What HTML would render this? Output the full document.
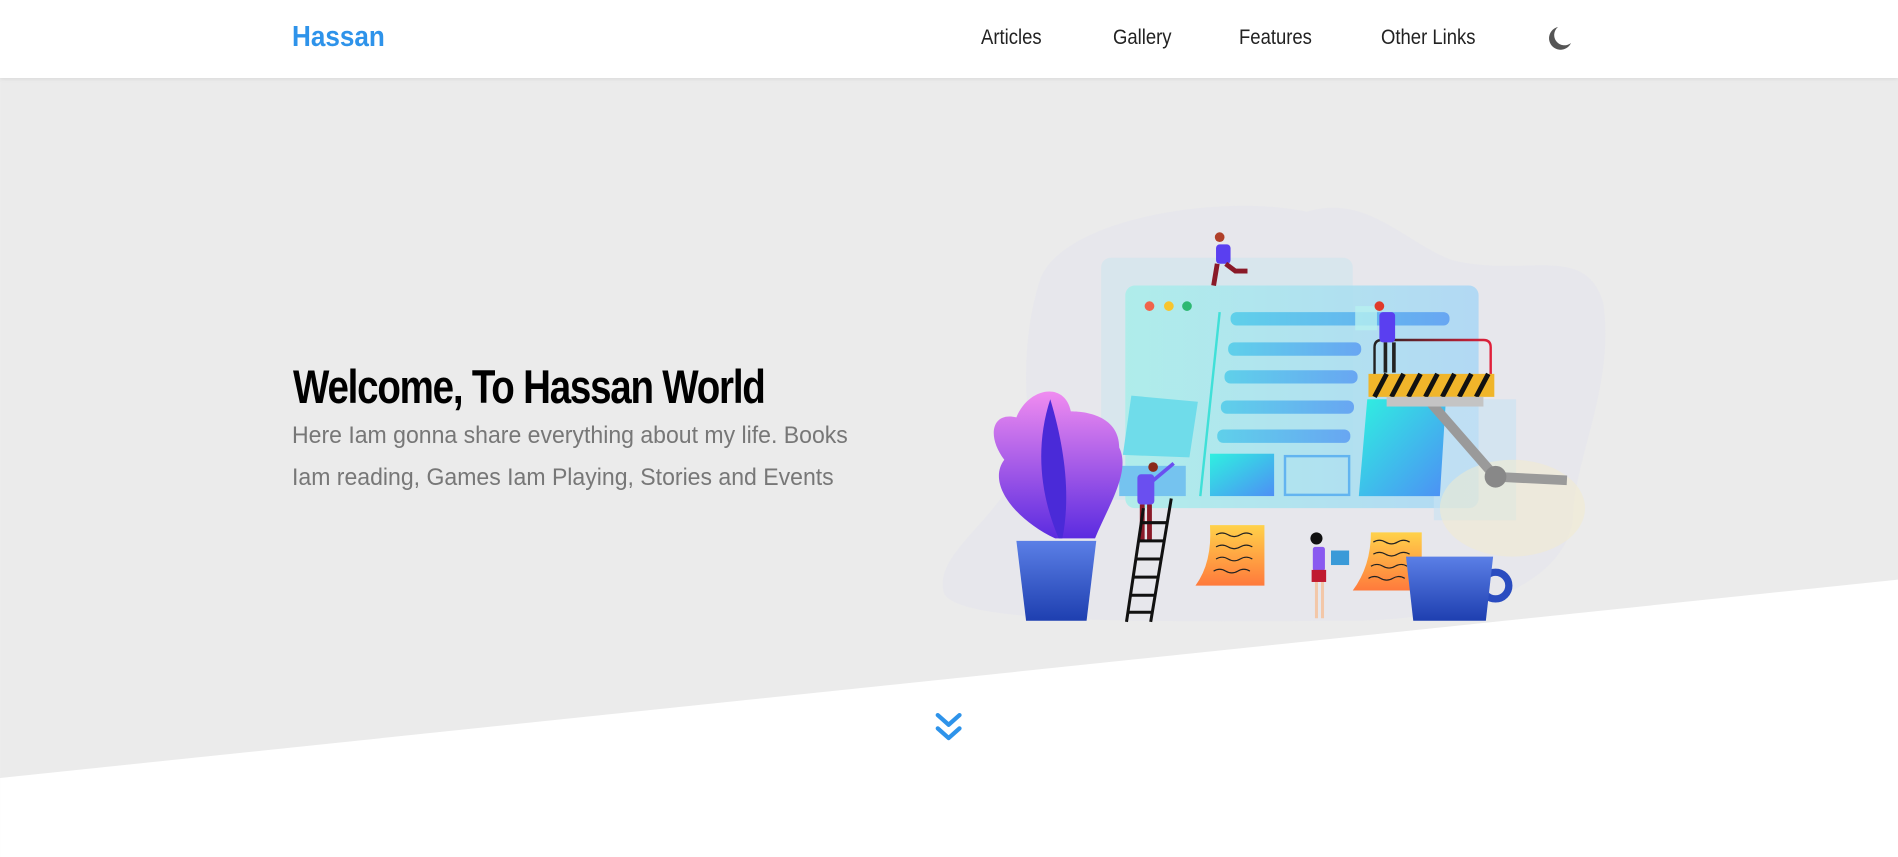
<!DOCTYPE html>
<html><head><meta charset="utf-8"><style>
*{margin:0;padding:0;box-sizing:border-box}
body{width:1898px;height:857px;overflow:hidden;background:#fff;font-family:"Liberation Sans",sans-serif;position:relative}
.bg{position:absolute;left:0;top:0}
header{position:absolute;left:0;top:0;width:1898px;height:78px;background:#fff;box-shadow:0 1px 4px rgba(0,0,0,.08);z-index:2}
.t{position:absolute;white-space:nowrap;transform-origin:0 0}
.logo{left:292px;top:21px;font-size:29px;font-weight:bold;color:#2e93ea;transform:scaleX(.9)}
.nav{top:26px;font-size:21px;color:#222;transform:scaleX(.88)}
h1{left:293px;top:359px;font-size:47px;font-weight:bold;color:#000;letter-spacing:-1.5px;transform:scaleX(.82)}
p.t{left:292px;top:415px;font-size:24px;line-height:42px;color:#777;transform:scaleX(.96)}
</style></head><body>
<svg class="bg" width="1898" height="857" viewBox="0 0 1568.6 708.3">
<defs>
<linearGradient id="pan" x1="0" x2="1"><stop offset="0" stop-color="#a8eeea"/><stop offset="1" stop-color="#a9d6f5"/></linearGradient>
<linearGradient id="bar" x1="0" x2="1"><stop offset="0" stop-color="#5fd0ea"/><stop offset="1" stop-color="#68a6f2"/></linearGradient>
<linearGradient id="blk" x1="0" y1="0" x2="1" y2="1"><stop offset="0" stop-color="#2ff0e0"/><stop offset="1" stop-color="#4d8ff5"/></linearGradient>
<linearGradient id="pot" x1="0" y1="0" x2="0" y2="1"><stop offset="0" stop-color="#5b7fe6"/><stop offset="1" stop-color="#1e3fb0"/></linearGradient>
<linearGradient id="leaf" x1="0" y1="0" x2="0" y2="1"><stop offset="0" stop-color="#f08cf0"/><stop offset="1" stop-color="#5b2be0"/></linearGradient>
<linearGradient id="note" x1="0" y1="0" x2="0" y2="1"><stop offset="0" stop-color="#ffd24a"/><stop offset="1" stop-color="#ff7a3c"/></linearGradient>
<linearGradient id="rail" x1="0" x2="1"><stop offset="0" stop-color="#222"/><stop offset="1" stop-color="#e0203a"/></linearGradient>
</defs>
<rect x="0" y="60" width="1569" height="650" fill="#ebebeb"/>
<polygon points="0,643 1569,479 1569,709 0,709" fill="#fff"/>
<path d="M860,230 C880,180 1010,160 1080,175 C1130,160 1160,200 1200,215 C1260,230 1310,200 1325,250 C1335,320 1300,380 1300,430 C1290,490 1200,515 1100,513 C900,515 790,512 780,490 C770,450 850,420 850,350 C845,300 850,260 860,230Z" fill="#e4e3ec" opacity=".55"/>
<rect x="910" y="213" width="208" height="200" rx="8" fill="#cfe6ee" opacity=".6"/>
<rect x="930" y="236" width="292" height="184" rx="8" fill="url(#pan)" opacity=".85"/>
<rect x="1185" y="330" width="68" height="100" fill="#c8e3f3" opacity=".6"/>
<circle cx="950" cy="253" r="4" fill="#f0644c"/><circle cx="966" cy="253" r="4" fill="#f7c52e"/><circle cx="981" cy="253" r="4" fill="#2eb872"/>
<line x1="1008" y1="258" x2="992" y2="410" stroke="#3fe0d8" stroke-width="2"/>
<rect x="1017" y="258" width="181" height="11" rx="5" fill="url(#bar)"/>
<rect x="1015" y="283" width="110" height="11" rx="5" fill="url(#bar)"/>
<rect x="1012" y="306" width="110" height="11" rx="5" fill="url(#bar)"/>
<rect x="1009" y="331" width="110" height="11" rx="5" fill="url(#bar)"/>
<rect x="1006" y="355" width="110" height="11" rx="5" fill="url(#bar)"/>
<polygon points="935,327 990,332 983,378 928,376" fill="#6fdcea"/>
<rect x="925" y="385" width="55" height="25" fill="#75c3ef"/>
<rect x="1000" y="375" width="53" height="35" fill="url(#blk)"/>
<rect x="1062" y="377" width="53" height="32" fill="none" stroke="#62b4f0" stroke-width="2"/>
<polygon points="1130,330 1195,330 1190,410 1123,410" fill="url(#blk)"/>
<ellipse cx="1250" cy="420" rx="60" ry="40" fill="#f4eccb" opacity=".5"/>
<line x1="1180" y1="330" x2="1235" y2="393" stroke="#9a9a9a" stroke-width="8"/>
<line x1="1235" y1="394" x2="1295" y2="397" stroke="#9a9a9a" stroke-width="8"/>
<circle cx="1236" cy="394" r="9" fill="#888"/>
<path d="M1136,310 V287 Q1136,281 1142,281 H1226 Q1232,281 1232,287 V310" fill="none" stroke="url(#rail)" stroke-width="2"/>
<g stroke="url(#rail)" stroke-width="2"><line x1="1150" y1="281" x2="1150" y2="310"/><line x1="1165" y1="281" x2="1165" y2="310"/><line x1="1180" y1="281" x2="1180" y2="310"/><line x1="1195" y1="281" x2="1195" y2="310"/><line x1="1210" y1="281" x2="1210" y2="310"/></g>
<rect x="1131" y="309" width="104" height="19" fill="#f0b52a"/>
<g stroke="#111" stroke-width="4"><line x1="1136" y1="328" x2="1146" y2="309"/><line x1="1150" y1="328" x2="1160" y2="309"/><line x1="1164" y1="328" x2="1174" y2="309"/><line x1="1178" y1="328" x2="1188" y2="309"/><line x1="1192" y1="328" x2="1202" y2="309"/><line x1="1206" y1="328" x2="1216" y2="309"/><line x1="1220" y1="328" x2="1230" y2="309"/></g>
<rect x="1146" y="328" width="80" height="8" fill="#c4c4c4"/>
<circle cx="1008" cy="196" r="4" fill="#b0402a"/><rect x="1005" y="202" width="12" height="16" rx="3" fill="#5a3ff0"/><path d="M1006,218 l-3,18 M1013,218 l8,6 l10,0" stroke="#8a1a28" stroke-width="4" fill="none"/>
<rect x="1120" y="253" width="18" height="20" fill="#b7f0f0" opacity=".8"/><circle cx="1140" cy="253" r="4" fill="#e03a2a"/><rect x="1140" y="258" width="13" height="25" rx="3" fill="#5a3ff0"/><path d="M1145,283 v25 M1152,283 v25" stroke="#222" stroke-width="3"/>
<circle cx="953" cy="386" r="4" fill="#8a2a1a"/><rect x="940" y="392" width="14" height="25" rx="3" fill="#6a4ff0"/><path d="M944,417 v30 M950,417 v30" stroke="#8a1a28" stroke-width="4"/><path d="M952,398 l18,-15" stroke="#6a4ff0" stroke-width="3"/>
<circle cx="1088" cy="445" r="5" fill="#111"/><rect x="1085" y="452" width="10" height="20" rx="2" fill="#8a5af0"/><rect x="1084" y="471" width="12" height="10" fill="#c01a30"/><path d="M1088,481 v30 M1093,481 v30" stroke="#f3c7a8" stroke-width="2.5"/><rect x="1100" y="455" width="15" height="12" fill="#3a9ad8"/>
<g stroke="#111" stroke-width="2.5"><line x1="945" y1="420" x2="931" y2="514"/><line x1="968" y1="412" x2="951" y2="514"/>
<line x1="943" y1="432" x2="964" y2="432"/><line x1="941" y1="447" x2="962" y2="447"/><line x1="939" y1="462" x2="959" y2="462"/><line x1="937" y1="477" x2="957" y2="477"/><line x1="935" y1="492" x2="955" y2="492"/><line x1="933" y1="506" x2="953" y2="506"/></g>
<path d="M1000,434 H1045 V484 H988 Q1002,465 1000,434Z" fill="url(#note)"/>
<path d="M1133,440 H1175 V488 H1118 Q1133,468 1133,440Z" fill="url(#note)"/>
<g stroke="#222" stroke-width="1" fill="none"><path d="M1005,442 q5,-3 10,0 t10,0 t10,0"/><path d="M1005,452 q5,-3 10,0 t10,0 t10,0"/><path d="M1005,462 q5,-3 10,0 t10,0 t10,0"/><path d="M1003,472 q5,-3 10,0 t10,0 t10,0"/>
<path d="M1135,448 q5,-3 10,0 t10,0 t10,0"/><path d="M1135,458 q5,-3 10,0 t10,0 t10,0"/><path d="M1133,468 q5,-3 10,0 t10,0 t10,0"/><path d="M1131,478 q5,-3 10,0 t10,0 t10,0"/></g>
<path d="M872,445 C840,430 815,400 830,380 C815,360 820,340 840,345 C850,320 880,315 885,340 C900,340 925,345 925,370 C935,390 915,420 905,445Z" fill="url(#leaf)"/>
<path d="M875,445 C860,410 855,370 868,330 C880,370 885,410 878,445Z" fill="#4a2ad8"/>
<polygon points="840,447 906,447 898,513 848,513" fill="url(#pot)"/>
<circle cx="1236" cy="484" r="11" fill="none" stroke="#2a4cc0" stroke-width="6"/>
<polygon points="1162,460 1234,460 1228,513 1168,513" fill="url(#pot)"/>
<g stroke="#2e93ea" stroke-width="3.5" fill="none" stroke-linecap="round" stroke-linejoin="round"><path d="M775,591 L784,599 L793,591"/><path d="M775,602 L784,610 L793,602"/></g>
</svg>
<header>
<div class="t logo">Hassan</div>
<div class="t nav" style="left:981px">Articles</div>
<div class="t nav" style="left:1113px">Gallery</div>
<div class="t nav" style="left:1239px">Features</div>
<div class="t nav" style="left:1381px">Other Links</div>
<svg style="position:absolute;left:1547px;top:25px" width="26" height="26" viewBox="0 0 26 26"><path d="M11,2 A11.5,11.5 0 1 0 24,18 A9.5,9.5 0 0 1 11,2Z" fill="#555"/></svg>
</header>
<h1 class="t">Welcome, To Hassan World</h1>
<p class="t">Here Iam gonna share everything about my life. Books<br>Iam reading, Games Iam Playing, Stories and Events</p>
</body></html>
